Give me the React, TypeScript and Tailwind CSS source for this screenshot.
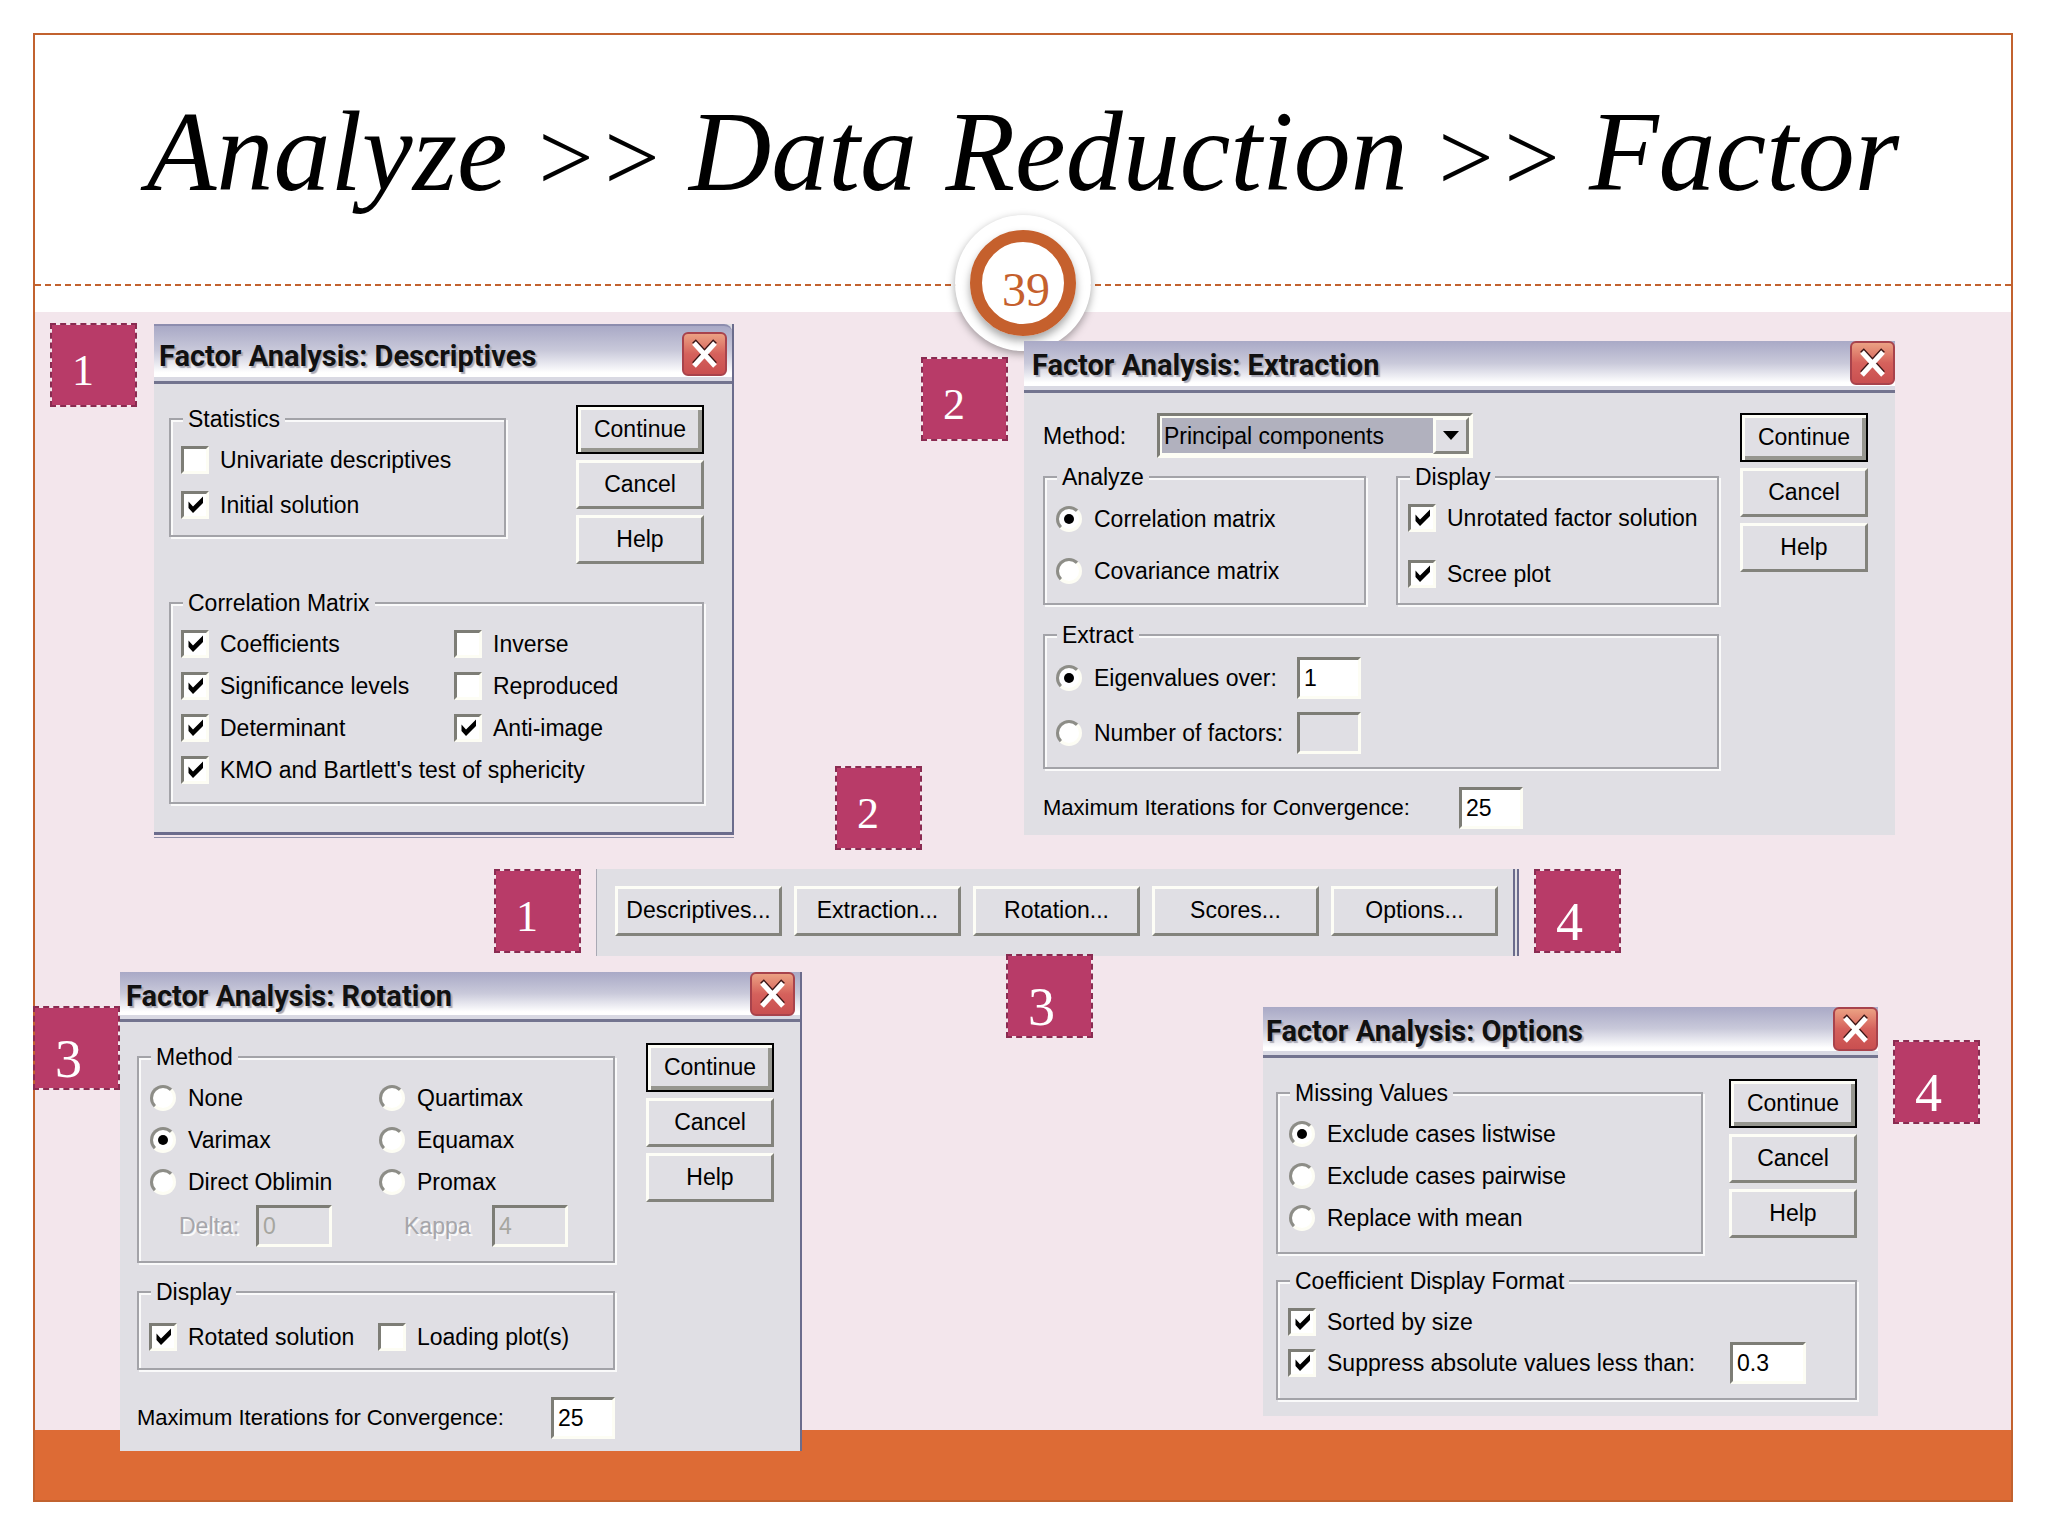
import type { ReactNode } from "react";
import clsx from "clsx";

const sunken = "border-[3px] border-t-[#7d7d76] border-l-[#7d7d76] border-r-[#fdfdf4] border-b-[#fdfdf4]";

function PushButton({ children, primary = false, className }: { children: ReactNode; primary?: boolean; className?: string }) {
  return (
    <button
      type="button"
      className={clsx(
        "bg-[#e0dfe4] pb-[2px] text-[23px] leading-7 text-black",
        primary
          ? "border-2 border-black shadow-[inset_3px_3px_0_#fdfdf6,inset_-4px_-4px_0_#96968f]"
          : "border-[3px] border-t-[#fdfdf6] border-l-[#fdfdf6] border-r-[#83837c] border-b-[#83837c]",
        className
      )}
    >
      {children}
    </button>
  );
}

function DialogButtons() {
  return (
    <div className="flex w-32 shrink-0 flex-col gap-[6px]">
      <PushButton primary className="h-[49px]">Continue</PushButton>
      <PushButton className="h-[49px]">Cancel</PushButton>
      <PushButton className="h-[49px]">Help</PushButton>
    </div>
  );
}

function Check({ label, checked = false }: { label: string; checked?: boolean }) {
  return (
    <label className="flex h-7 items-center gap-[11px] whitespace-nowrap">
      <span className="grid size-7 shrink-0">
        <input type="checkbox" defaultChecked={checked} className={clsx("peer size-7 appearance-none bg-white [grid-area:1/1]", sunken)} />
        <svg viewBox="0 0 28 28" className="pointer-events-none hidden size-7 [grid-area:1/1] peer-checked:block">
          <path d="M7.5 10.500v6.500l4.500 5 10-10V5.500L12 15.500z" fill="#000" />
        </svg>
      </span>
      {label}
    </label>
  );
}

function Radio({ label, name, checked = false }: { label: string; name: string; checked?: boolean }) {
  return (
    <label className="flex h-7 items-center gap-[11px] whitespace-nowrap">
      <span className="grid size-7 shrink-0 place-items-center">
        <input
          type="radio"
          name={name}
          defaultChecked={checked}
          className="peer size-[26px] appearance-none rounded-full border-[3px] border-t-[#8d8d87] border-r-[#fdfdf4] border-b-[#fdfdf4] border-l-[#8d8d87] bg-white [grid-area:1/1]"
        />
        <span className="pointer-events-none hidden size-[10px] rounded-full bg-black [grid-area:1/1] peer-checked:block" />
      </span>
      {label}
    </label>
  );
}

function TextBox({ value, label, disabled = false, className }: { value: string; label: string; disabled?: boolean; className?: string }) {
  return (
    <input
      type="text"
      aria-label={label}
      defaultValue={value}
      disabled={disabled}
      className={clsx(
        "h-[42px] shrink-0 px-1 text-[23px] leading-7",
        sunken,
        disabled ? "bg-[#e0dfe4] text-[#a6a69f]" : "bg-white text-black",
        className
      )}
    />
  );
}

function Group({ title, className, children }: { title: string; className?: string; children: ReactNode }) {
  return (
    <fieldset className={clsx("min-w-0 border-2 border-[#a3a3a8] px-[10px] shadow-[inset_2px_2px_0_#fafafa,2px_2px_0_#fafafa]", className)}>
      <legend className="ml-[2px] bg-[#e0dfe4] px-[5px]">{title}</legend>
      {children}
    </fieldset>
  );
}

function Iterations() {
  return (
    <label className="flex items-center text-[22px]">
      <span className="w-[416px] whitespace-nowrap">Maximum Iterations for Convergence:</span>
      <TextBox label="Maximum Iterations for Convergence" value="25" className="w-16" />
    </label>
  );
}

function CloseButton() {
  return (
    <button type="button" aria-label="Close" className="h-11 w-[45px] rounded-md border-2 border-[#a8434c] bg-linear-to-b from-[#eba183] via-[#d5615c] to-[#c94f50]">
      <svg viewBox="0 0 41 40" className="size-full">
        <path d="M10 7l21 23M31 7L10 30" stroke="#3a1414" strokeWidth="5" fill="none" />
        <path d="M10 9l21 23M31 9L10 32" stroke="#fff" strokeWidth="5" fill="none" />
      </svg>
    </button>
  );
}

interface DialogProps {
  title: string;
  className?: string;
  barClass?: string;
  bodyClass?: string;
  children: ReactNode;
}

function Dialog({ title, className, barClass, bodyClass, children }: DialogProps) {
  return (
    <section className={clsx("absolute z-20 bg-[#e0dfe4] text-[23px] leading-7 text-black", className)}>
      <header
        className={clsx(
          "flex items-start justify-between border-b-[3px] border-[#73748f] bg-linear-to-b from-[#a9a9c6] via-[#c9c9da] via-45% to-white to-85% shadow-[inset_0_-4px_0_#d9d9e3]",
          barClass
        )}
      >
        <h2 className="font-['Roboto',sans-serif] text-[29px] leading-[48px] font-bold text-[#111] [text-shadow:2px_2px_1px_#a9a9b6]">{title}</h2>
        <CloseButton />
      </header>
      <div className={bodyClass}>{children}</div>
    </section>
  );
}

// Numbered marker tying a launcher button to its dialog
function Marker({ n, className }: { n: number; className?: string }) {
  return (
    <div className={clsx("h-[84px] w-[87px] shrink-0 border-2 border-dashed border-[#8a2b51] bg-[#b83b68] bg-clip-padding font-['Liberation_Serif',serif] text-white", className)}>
      <span className={clsx("block pl-5", n > 2 ? "pt-[18px] text-[54px] leading-[66px]" : "pt-[10px] text-[44px] leading-[72px]")}>{n}</span>
    </div>
  );
}

const launchers = ["Descriptives...", "Extraction...", "Rotation...", "Scores...", "Options..."];

export default function App() {
  return (
    <main className="flex min-h-screen flex-col bg-white pt-[33px] pr-[35px] pb-[34px] pl-[33px] font-['Liberation_Sans',sans-serif]">
      <div className="flex flex-1 flex-col border-2 border-[#c2622f]">
        <div className="relative z-10">
          <h1 className="h-[249px] pt-[50px] text-center font-['Liberation_Serif',serif] text-[114px] leading-[134px] whitespace-nowrap text-black italic">
            Analyze<span className="text-[98px]"> &gt;&gt; </span>Data Reduction<span className="text-[98px]"> &gt;&gt; </span>Factor
          </h1>
          <div className="h-7 border-t-2 border-dashed border-[#c2622f]" />
          <div className="absolute bottom-[-39px] left-1/2 grid size-[136px] -translate-x-1/2 place-items-center rounded-full bg-white shadow-[0_3px_8px_rgba(0,0,0,0.35)]">
            <div className="grid size-[106px] place-items-center rounded-full border-[12px] border-[#c5602d] font-['Liberation_Serif',serif] text-[48px] leading-none text-[#c5602d] shadow-[0_5px_8px_rgba(0,0,0,0.35)]">
              <span className="pt-[14px] pl-[6px]">39</span>
            </div>
          </div>
        </div>

        <div className="relative flex-1 bg-[#f3e6ec]">
          <Marker n={1} className="absolute top-[11px] left-[15px]" />
          <Dialog
            title="Factor Analysis: Descriptives"
            className="top-[12px] left-[119px] w-[580px] border-r-2 border-b-[3px] border-[#6b6c8c] shadow-[0_2px_0_#f3e6ec,0_3px_0_#8d8da6]"
            barClass="h-[60px] rounded-tr-lg border-t-2 border-t-[#8d8dae] pt-[6px] pr-[5px] pl-[5px]"
            bodyClass="pt-[21px] pr-[28px] pb-[28px] pl-[15px]"
          >
            <div className="flex items-start justify-between">
              <Group title="Statistics" className="w-[337px] pt-[13px] pb-[16px]">
                <div className="flex flex-col gap-[17px]">
                  <Check label="Univariate descriptives" />
                  <Check label="Initial solution" checked />
                </div>
              </Group>
              <DialogButtons />
            </div>
            <Group title="Correlation Matrix" className="mt-[25px] pt-[13px] pb-[18px]">
              <div className="grid grid-cols-[273px_1fr] gap-y-[14px]">
                <Check label="Coefficients" checked />
                <Check label="Inverse" />
                <Check label="Significance levels" checked />
                <Check label="Reproduced" />
                <Check label="Determinant" checked />
                <Check label="Anti-image" checked />
                <Check label="KMO and Bartlett's test of sphericity" checked />
              </div>
            </Group>
          </Dialog>

          <Marker n={2} className="absolute top-[45px] right-[1003px]" />
          <Dialog
            title="Factor Analysis: Extraction"
            className="top-[29px] right-[116px] w-[871px]"
            barClass="h-[52px] pl-2"
            bodyClass="flex items-start justify-between pt-[20px] pr-[27px] pb-[6px] pl-[19px]"
          >
            <div className="w-[676px]">
              <div className="flex h-[45px] items-center">
                <label htmlFor="method" className="w-[114px]">Method:</label>
                <div className="relative">
                  <select
                    id="method"
                    className={clsx("h-[45px] w-[316px] appearance-none bg-[#b1b1be] px-1 text-[23px] leading-7 shadow-[inset_0_0_0_2px_#fdfdf4]", sunken)}
                  >
                    <option>Principal components</option>
                  </select>
                  <span className="pointer-events-none absolute top-[4px] right-[4px] grid h-[37px] w-[36px] place-items-center border-[3px] border-t-[#fdfdf6] border-r-[#83837c] border-b-[#83837c] border-l-[#fdfdf6] bg-[#e0dfe4]">
                    <svg viewBox="0 0 16 9" className="h-[9px] w-4">
                      <path d="M0 0h16L8 9z" fill="#000" />
                    </svg>
                  </span>
                </div>
              </div>
              <div className="mt-[5px] grid grid-cols-2 gap-[30px]">
                <Group title="Analyze" className="pt-[14px] pb-[18px]">
                  <div className="flex flex-col gap-6">
                    <Radio name="analyze" label="Correlation matrix" checked />
                    <Radio name="analyze" label="Covariance matrix" />
                  </div>
                </Group>
                <Group title="Display" className="pt-[13px] pb-[14px]">
                  <div className="flex flex-col gap-7">
                    <Check label="Unrotated factor solution" checked />
                    <Check label="Scree plot" checked />
                  </div>
                </Group>
              </div>
              <Group title="Extract" className="mt-[16px] pt-2 pb-[13px]">
                <div className="grid grid-cols-[242px_1fr] items-center gap-y-[13px]">
                  <Radio name="extract" label="Eigenvalues over:" checked />
                  <TextBox label="Eigenvalues over" value="1" className="w-16" />
                  <Radio name="extract" label="Number of factors:" />
                  <TextBox label="Number of factors" value="" disabled className="w-16" />
                </div>
              </Group>
              <div className="mt-[18px]">
                <Iterations />
              </div>
            </div>
            <DialogButtons />
          </Dialog>

          {/* Launcher bar */}
          <Marker n={2} className="absolute top-[454px] left-[800px]" />
          <div className="absolute top-[557px] left-[459px] z-20 flex items-start gap-[15px]">
            <Marker n={1} />
            <div className="flex h-[87px] items-start gap-3 border-r-[6px] border-l border-double border-r-[#6b6c8c] border-l-[#a9a9b4] bg-[#e0dfe4] pt-[17px] pr-[15px] pl-[18px] [border-left-style:solid]">
              {launchers.map((name) => (
                <PushButton key={name} className="h-[50px] w-[167px] whitespace-nowrap">{name}</PushButton>
              ))}
            </div>
            <Marker n={4} />
          </div>
          <Marker n={3} className="absolute top-[642px] left-[971px] z-20" />

          <Marker n={3} className="absolute top-[694px] -left-[2px]" />
          <Dialog
            title="Factor Analysis: Rotation"
            className="top-[660px] left-[85px] w-[682px] border-r-2 border-[#6b6c8c]"
            barClass="h-[50px] pr-[5px] pl-[6px]"
            bodyClass="flex items-start justify-between pt-[21px] pr-[26px] pb-[12px] pl-[17px]"
          >
            <div className="w-[478px]">
              <Group title="Method" className="pt-[13px] pb-[14px]">
                <div className="grid grid-cols-[229px_1fr] gap-y-[14px]">
                  <Radio name="rotation" label="None" />
                  <Radio name="rotation" label="Quartimax" />
                  <Radio name="rotation" label="Varimax" checked />
                  <Radio name="rotation" label="Equamax" />
                  <Radio name="rotation" label="Direct Oblimin" />
                  <Radio name="rotation" label="Promax" />
                </div>
                <div className="mt-[9px] grid grid-cols-[229px_1fr] text-[#a6a6aa] [text-shadow:2px_2px_0_#fafafa]">
                  <label className="flex items-center pl-[30px]">
                    <span className="w-[77px]">Delta:</span>
                    <TextBox label="Delta" value="0" disabled className="w-[76px]" />
                  </label>
                  <label className="flex items-center pl-[26px]">
                    <span className="w-[88px]">Kappa</span>
                    <TextBox label="Kappa" value="4" disabled className="w-[76px]" />
                  </label>
                </div>
              </Group>
              <Group title="Display" className="mt-[15px] pt-[17px] pb-[17px]">
                <div className="grid grid-cols-[229px_1fr]">
                  <Check label="Rotated solution" checked />
                  <Check label="Loading plot(s)" />
                </div>
              </Group>
              <div className="mt-[27px]">
                <Iterations />
              </div>
            </div>
            <DialogButtons />
          </Dialog>

          <Dialog
            title="Factor Analysis: Options"
            className="top-[695px] right-[133px] w-[615px]"
            barClass="h-[51px] pl-[3px]"
            bodyClass="pt-[21px] pr-[21px] pb-[16px] pl-[13px]"
          >
            <div className="flex items-start justify-between">
              <Group title="Missing Values" className="w-[427px] pt-[13px] pb-[20px]">
                <div className="flex flex-col gap-[14px]">
                  <Radio name="missing" label="Exclude cases listwise" checked />
                  <Radio name="missing" label="Exclude cases pairwise" />
                  <Radio name="missing" label="Replace with mean" />
                </div>
              </Group>
              <DialogButtons />
            </div>
            <Group title="Coefficient Display Format" className="mt-[13px] pt-[13px] pb-[14px]">
              <Check label="Sorted by size" checked />
              <div className="mt-[6px] flex items-center">
                <div className="w-[442px]">
                  <Check label="Suppress absolute values less than:" checked />
                </div>
                <TextBox label="Suppress absolute values less than" value="0.3" className="w-[76px]" />
              </div>
            </Group>
          </Dialog>
          <Marker n={4} className="absolute top-[728px] right-[31px]" />
        </div>

        <footer className="h-[70px] bg-[#dd6b35]" />
      </div>
    </main>
  );
}
